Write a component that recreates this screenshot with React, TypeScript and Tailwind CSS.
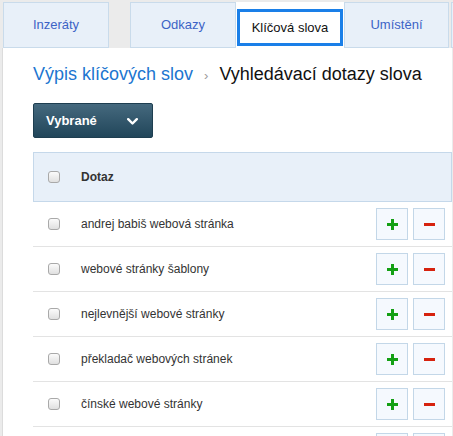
import React from "react";

const rows = [
  "andrej babiš webová stránka",
  "webové stránky šablony",
  "nejlevnější webové stránky",
  "překladač webových stránek",
  "čínské webové stránky",
  "",
];

function Check() {
  return (
    <span className="block w-[12px] h-[12px] shrink-0 rounded-[3px] border border-[#a9a9a9] bg-gradient-to-b from-[#fbfbfb] to-[#e0e0e0]" />
  );
}

function Tab({ label, w }: { label: string; w: string }) {
  return (
    <div
      className={`${w} h-[46px] shrink-0 flex items-center justify-center border border-[#c9dbeb] bg-[#e8f0f9] text-[13px] text-[#3c63c6]`}
    >
      {label}
    </div>
  );
}

export default function App() {
  return (
    <div
      className="w-[453px] h-[436px] overflow-hidden bg-[#ebebeb] flex flex-col"
      style={{ fontFamily: '"Liberation Sans", Arial, sans-serif' }}
    >
      {/* tabs */}
      <div className="flex pt-[2px] pl-[3px] shrink-0">
        <Tab label="Inzeráty" w="w-[106px]" />
        <div className="w-[21px] shrink-0" />
        <Tab label="Odkazy" w="w-[106px]" />
        <div className="w-[108px] h-[47px] shrink-0 bg-white flex flex-col pt-[7px] px-[1px] pb-[3px] -mb-[1px] relative z-10">
          <div className="flex-1 flex items-center justify-center border-[3px] border-[#1a7fe8] text-[13px] text-[#111]">
            Klíčová slova
          </div>
        </div>
        <Tab label="Umístění" w="w-[105px]" />
        <div className="w-[2px] shrink-0" />
        <Tab label="" w="w-[60px]" />
      </div>

      {/* panel */}
      <div className="flex-1 ml-[2px] mr-[1px] bg-white border-l border-[#dcdcdc] pl-[30px] flex flex-col">
        <div className="mt-[15px] flex items-baseline text-[18px] leading-[22px] whitespace-nowrap">
          <span className="text-[#2075d0]">Výpis klíčových slov</span>
          <span className="mx-[11px] text-[#9a9a9a] text-[13px]">›</span>
          <span className="text-[#111]">Vyhledávací dotazy slova</span>
        </div>

        <div className="mt-[16px] w-[120px] h-[35px] rounded-[2px] border border-[#1e3e50] bg-gradient-to-b from-[#45697e] to-[#21465a] flex items-center justify-between pl-[12px] pr-[14px]">
          <span className="text-white font-bold text-[13px]">Vybrané</span>
          <svg width="11" height="7" viewBox="0 0 11 7" fill="none" className="mt-[1px]">
            <path d="M1.2 1.2 L5.5 5.5 L9.8 1.2" stroke="#fff" strokeWidth="2.4" strokeLinecap="round" strokeLinejoin="round" />
          </svg>
        </div>

        <div className="mt-[14px] flex flex-col">
          <div className="h-[50px] border border-[#c5d8ea] bg-[#e8f0f9] flex items-center pl-[14px]">
            <Check />
            <span className="ml-[21px] text-[12px] font-bold text-[#333]">Dotaz</span>
          </div>
          {rows.map((r, i) => (
            <div
              key={i}
              className="h-[45px] shrink-0 border-b border-[#e3e3e3] flex items-center pl-[15px] pr-[7px]"
            >
              <Check />
              <span className="ml-[21px] flex-1 text-[12px] text-[#333]">{r}</span>
              <div className="flex gap-[5px]">
                <div className="w-[32px] h-[32px] border border-[#c3d7e8] bg-[#f5f9fe] flex items-center justify-center">
                  <span className="relative block w-[11px] h-[11px]">
                    <span className="absolute left-0 top-[4px] w-[11px] h-[3px] bg-[#14a014]" />
                    <span className="absolute top-0 left-[4px] w-[3px] h-[11px] bg-[#14a014]" />
                  </span>
                </div>
                <div className="w-[32px] h-[32px] border border-[#c3d7e8] bg-[#f5f9fe] flex items-center justify-center">
                  <span className="block w-[11px] h-[3px] bg-[#d6220e]" />
                </div>
              </div>
            </div>
          ))}
        </div>
      </div>
    </div>
  );
}
